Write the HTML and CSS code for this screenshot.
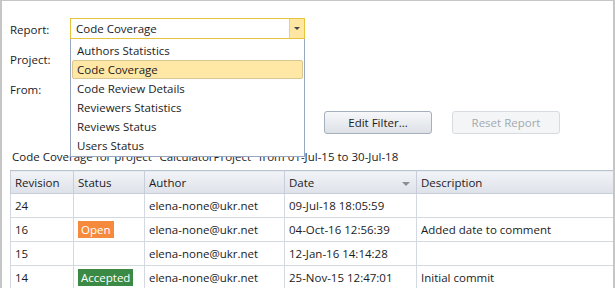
FILE: index.html
```html
<!DOCTYPE html>
<html lang="en">
<head>
  <meta charset="UTF-8" />
  <title>Review Reports</title>
  <link rel="stylesheet" href="styles.css">
</head>
<body>

<div class="window">

  <section class="filters">
    <div class="field">
      <label>Report:</label>
      <div class="combo focused">
        <span class="combo-text">Code Coverage</span>
        <span class="combo-btn"><span class="arrow"></span></span>

        <ul class="dropdown">
          <li>Authors Statistics</li>
          <li class="selected">Code Coverage</li>
          <li>Code Review Details</li>
          <li>Reviewers Statistics</li>
          <li>Reviews Status</li>
          <li>Users Status</li>
        </ul>
      </div>
    </div>
    <div class="field">
      <label>Project:</label>
      <div class="combo"></div>
    </div>
    <div class="field">
      <label>From:</label>
      <div class="combo"></div>
    </div>

    <div class="actions">
      <button class="btn">Edit Filter...</button>
      <button class="btn" disabled>Reset Report</button>
    </div>
  </section>

  <p class="caption">Code Coverage for project "CalculatorProject" from 01-Jul-15 to 30-Jul-18</p>

  <table class="grid">
    <thead>
      <tr>
        <th class="col-rev">Revision</th>
        <th class="col-status">Status</th>
        <th class="col-author">Author</th>
        <th class="col-date">Date <span class="sort"></span></th>
        <th>Description</th>
      </tr>
    </thead>
    <tbody>
      <tr>
        <td>24</td>
        <td></td>
        <td>elena-none@ukr.net</td>
        <td>09-Jul-18 18:05:59</td>
        <td></td>
      </tr>
      <tr>
        <td>16</td>
        <td><span class="badge open">Open</span></td>
        <td>elena-none@ukr.net</td>
        <td>04-Oct-16 12:56:39</td>
        <td>Added date to comment</td>
      </tr>
      <tr>
        <td>15</td>
        <td></td>
        <td>elena-none@ukr.net</td>
        <td>12-Jan-16 14:14:28</td>
        <td></td>
      </tr>
      <tr>
        <td>14</td>
        <td><span class="badge accepted">Accepted</span></td>
        <td>elena-none@ukr.net</td>
        <td>25-Nov-15 12:47:01</td>
        <td>Initial commit</td>
      </tr>
    </tbody>
  </table>

</div>

</body>
</html>
```

FILE: styles.css
```css
body {
  margin: 0;
  font-family: 'Open Sans', 'Noto Sans', sans-serif;
  font-size: 11.5px;
  color: #1b1b24;
  background: #fff;
}

.window {
  height: 288px;
  box-sizing: border-box;
  border-top: 1px solid #c6c6c6;
  border-left: 2px solid #c6c6c6;
  border-right: 2px solid #c6c6c6;
  padding: 17px 0 0 8px;
  overflow: hidden;
}

.filters {
  display: flex;
  flex-direction: column;
  gap: 9px;
}

.field {
  display: flex;
  align-items: center;
  height: 21px;
}

.field label {
  width: 60px;
  padding-top: 1px;
}

.combo {
  position: relative;
  width: 235px;
  height: 21px;
  box-sizing: border-box;
  display: flex;
}

.combo.focused {
  border: 1px solid #e6c43c;
}

.combo-text {
  flex: 1;
  padding-left: 5px;
  line-height: 20px;
}

.combo-btn {
  width: 14px;
  border-left: 1px solid #e6cf86;
  background: #ffe7a3;
  display: flex;
  align-items: center;
  justify-content: center;
}

.arrow {
  width: 0;
  height: 0;
  border-left: 3px solid transparent;
  border-right: 3px solid transparent;
  border-top: 3px solid #444;
}

/* popup list of the report combo */
.dropdown {
  position: absolute;
  top: 20px;
  left: -1px;
  width: 235px;
  box-sizing: border-box;
  margin: 0;
  padding: 2px 1px 1px;
  list-style: none;
  background: #fff;
  border: 1px solid #97a7bd;
  border-top: none;
  z-index: 2;
}

.dropdown li {
  height: 19px;
  line-height: 18px;
  padding-left: 4px;
  box-sizing: border-box;
  border: 1px solid transparent;
  border-radius: 2px;
}

.dropdown li.selected {
  background: #ffe8a6;
  border-color: #d9c691;
}

.actions {
  display: flex;
  gap: 20px;
  padding-left: 314px;
  margin-top: 3px;
}

.btn {
  width: 108px;
  height: 23px;
  font-family: inherit;
  font-size: 11.5px;
  color: #1b1b24;
  border: 1px solid #a6afbd;
  border-radius: 3px;
  background: linear-gradient(#f6f7f9, #dde1e7);
  padding: 0;
}

.btn:disabled {
  color: #a3a9b1;
  border-color: #d7dbe0;
  background: #f4f5f6;
}

.caption {
  margin: 15px 0 0 2px;
  line-height: 16px;
}

.grid {
  margin-top: 5px;
  border-collapse: collapse;
  width: 640px;
  table-layout: fixed;
  border-left: 1px solid #9aa6b8;
}

.grid th,
.grid td {
  text-align: left;
  padding: 0 0 0 4px;
  border: 1px solid #d3d8e1;
  white-space: nowrap;
  overflow: hidden;
}

.grid th {
  font-weight: normal;
  height: 22px;
  background: linear-gradient(#f1f3f7, #dee2e9);
  border-color: #c7ced9;
  border-top: 1px solid #b9c2cf;
}

.grid td {
  height: 23px;
}

.col-rev { width: 58px; }
.col-status { width: 66px; }
.col-author { width: 135px; }
.col-date { width: 127px; }

.col-date .sort {
  float: right;
  margin: 7px 6px 0 0;
  border-left: 4px solid transparent;
  border-right: 4px solid transparent;
  border-top: 4px solid #8a8f96;
}

.badge {
  display: inline-block;
  padding: 0 3px;
  line-height: 17px;
  color: #fff;
}

.badge.open {
  background: #f68a3c;
}

.badge.accepted {
  background: #3a8a45;
}
```
